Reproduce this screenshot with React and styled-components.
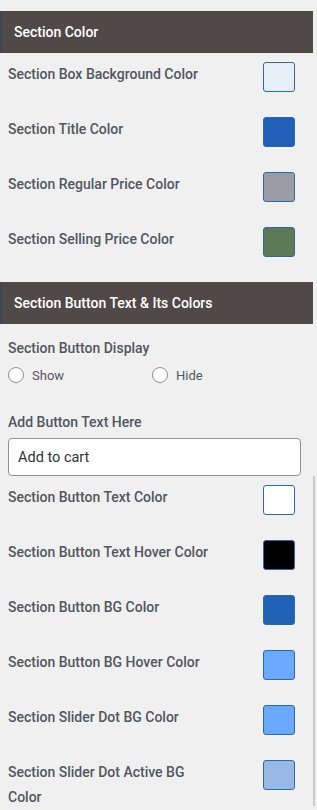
import React from "react";
import styled, { createGlobalStyle } from "styled-components";

const Global = createGlobalStyle`
  html, body { margin: 0; padding: 0; background: #f0f0f1; }
  body { font-family: Roboto, "Noto Sans", sans-serif; }
`;

const Panel = styled.div`
  width: 317px;
  padding-top: 11px;
  box-sizing: border-box;
`;

const Header = styled.div`
  width: 313px;
  height: 42px;
  box-sizing: border-box;
  background: #504947;
  border-left: 2px solid #3b4752;
  color: #ffffff;
  font-size: 14px;
  font-weight: 500;
  display: flex;
  align-items: center;
  padding-left: 12px;
  margin-top: ${(p) => p.$mt || 0}px;
`;

const Block = styled.div`
  width: ${(p) => (p.$ruled ? 315 : 313)}px;
  box-sizing: border-box;
  border-right: ${(p) => (p.$ruled ? "2px solid #cbcbcb" : "none")};
`;

const Row = styled.div`
  display: flex;
  justify-content: space-between;
  align-items: flex-start;
  height: 55px;
  box-sizing: border-box;
  padding: 7px 18px 0 8px;
`;

const Label = styled.div`
  max-width: 212px;
  margin-top: 1.5px;
  font-size: 14px;
  font-weight: 500;
  line-height: 25px;
  color: #50575e;
`;

const Swatch = styled.div`
  width: 32px;
  height: 30px;
  margin-top: 2px;
  box-sizing: border-box;
  border: 1px solid #2c6aa0;
  border-radius: 3px;
  background: ${(p) => p.$color};
`;

const Field = styled.div`
  padding: 0 12px 0 8px;
`;

const FieldLabel = styled.div`
  font-size: 14px;
  font-weight: 500;
  line-height: 21px;
  color: #50575e;
  margin-top: ${(p) => p.$mt || 0}px;
`;

const Radios = styled.div`
  display: grid;
  grid-template-columns: 144px 144px;
  margin-top: 6px;
`;

const RadioOption = styled.label`
  display: flex;
  align-items: center;
  gap: 8px;
  font-size: 13px;
  color: #50575e;
  height: 20px;
`;

const RadioCircle = styled.span`
  width: 16px;
  height: 16px;
  box-sizing: border-box;
  border: 1px solid #8c8f94;
  border-radius: 50%;
  background: #ffffff;
`;

const TextInput = styled.div`
  margin-top: 5px;
  width: 293px;
  height: 38px;
  box-sizing: border-box;
  border: 1px solid #8c8f94;
  border-radius: 4px;
  background: #ffffff;
  display: flex;
  align-items: center;
  padding-left: 9px;
  font-size: 14.5px;
  color: #2c3338;
`;

const topRows = [
  ["Section Box Background Color", "#e6eef8"],
  ["Section Title Color", "#2060b8"],
  ["Section Regular Price Color", "#9b9ca5"],
  ["Section Selling Price Color", "#5b7b56"],
];

const bottomRows = [
  ["Section Button Text Color", "#ffffff"],
  ["Section Button Text Hover Color", "#000000"],
  ["Section Button BG Color", "#2062b5"],
  ["Section Button BG Hover Color", "#6aa9fd"],
  ["Section Slider Dot BG Color", "#69a8fb"],
  ["Section Slider Dot Active BG Color", "#98b9e6"],
];

const ColorRow = ({ label, color }) => (
  <Row>
    <Label>{label}</Label>
    <Swatch $color={color} />
  </Row>
);

export default function App() {
  return (
    <>
      <Global />
      <Panel>
        <Header>Section Color</Header>
        <Block>
          {topRows.map(([l, c]) => (
            <ColorRow key={l} label={l} color={c} />
          ))}
        </Block>
        <Header $mt={9}>Section Button Text &amp; Its Colors</Header>
        <Field>
          <FieldLabel $mt={14}>Section Button Display</FieldLabel>
          <Radios>
            <RadioOption>
              <RadioCircle />
              Show
            </RadioOption>
            <RadioOption>
              <RadioCircle />
              Hide
            </RadioOption>
          </Radios>
          <FieldLabel $mt={27}>Add Button Text Here</FieldLabel>
          <TextInput>Add to cart</TextInput>
        </Field>
        <Block $ruled>
          {bottomRows.map(([l, c]) => (
            <ColorRow key={l} label={l} color={c} />
          ))}
        </Block>
      </Panel>
    </>
  );
}
